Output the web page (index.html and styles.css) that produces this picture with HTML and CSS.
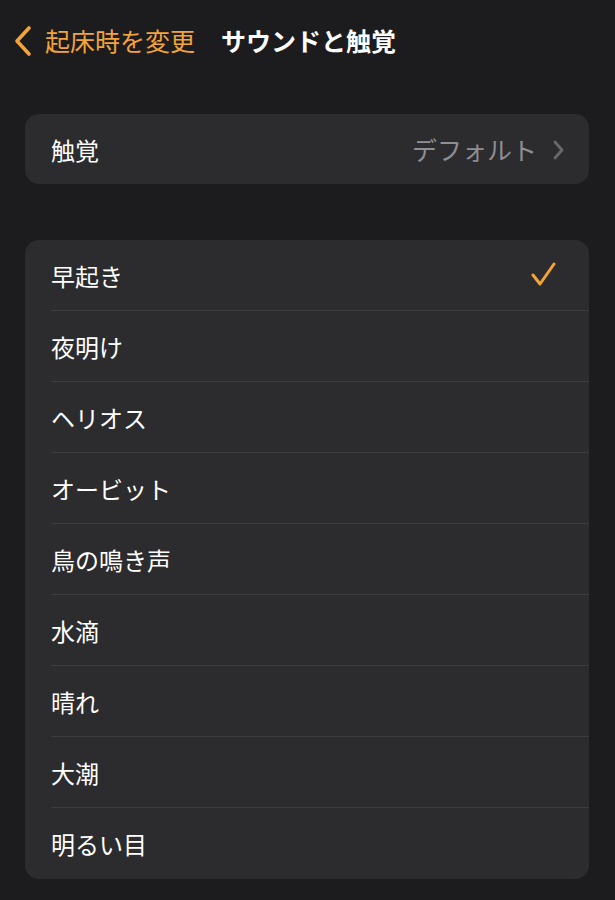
FILE: index.html
```html
<!DOCTYPE html>
<html lang="ja">
<head>
    <meta charset="UTF-8">
    <meta name="viewport" content="width=device-width, initial-scale=1.0">
    <title>サウンドと触覚</title>
    <link rel="stylesheet" href="styles.css">
</head>
<body>
    <div class="nav">
        <a class="back">
            <svg class="back-icon" width="20" height="32" viewBox="0 0 20 32">
                <path d="M16 3 L4 16 L16 29" fill="none" stroke="#f2a33a" stroke-width="3.6" stroke-linecap="round" stroke-linejoin="round"/>
            </svg>
            <span>起床時を変更</span>
        </a>
        <h1 class="title">サウンドと触覚</h1>
    </div>

    <div class="group haptic">
        <div class="row">
            <span class="label">触覚</span>
            <span class="value">デフォルト</span>
            <svg class="chev" width="14" height="22" viewBox="0 0 14 22">
                <path d="M4 3 L11 11 L4 19" fill="none" stroke="#68686c" stroke-width="2.8" stroke-linecap="round" stroke-linejoin="round"/>
            </svg>
        </div>
    </div>

    <div class="group sounds">
        <div class="row">
            <span class="label">早起き</span>
            <svg class="check" width="28" height="26" viewBox="0 0 28 26">
                <path d="M3 13 L10 22 L24 2" fill="none" stroke="#f2a33a" stroke-width="3" stroke-linecap="round" stroke-linejoin="round"/>
            </svg>
        </div>
        <div class="row"><span class="label">夜明け</span></div>
        <div class="row"><span class="label">ヘリオス</span></div>
        <div class="row"><span class="label">オービット</span></div>
        <div class="row"><span class="label">鳥の鳴き声</span></div>
        <div class="row"><span class="label">水滴</span></div>
        <div class="row"><span class="label">晴れ</span></div>
        <div class="row"><span class="label">大潮</span></div>
        <div class="row"><span class="label">明るい目</span></div>
    </div>
</body>
</html>
```

FILE: styles.css
```css
body {
    margin: 0;
    background-color: #1c1c1e;
    color: #ffffff;
    font-family: "Noto Sans CJK JP", "Noto Sans", sans-serif;
    font-size: 24px;
    padding: 0 26px 0 25px;
}
.nav {
    display: flex;
    align-items: center;
    height: 80px;
    padding-bottom: 4px;
    margin-left: -12px;
}
.back {
    display: flex;
    align-items: center;
    color: #f2a33a;
    font-size: 25px;
}
.back-icon {
    margin-right: 12px;
    margin-top: 2px;
}
.title {
    margin: 0 0 0 26px;
    font-size: 25px;
    font-weight: bold;
}
.group {
    background-color: #2c2c2e;
    border-radius: 14px;
    padding-left: 26px;
}
.haptic {
    margin-top: 30px;
}
.sounds {
    margin-top: 56px;
}
.row {
    display: flex;
    align-items: center;
    height: 70px;
    padding-right: 24px;
}
.sounds .row {
    height: 71px;
    box-sizing: border-box;
    border-bottom: 1px solid #3d3d40;
    padding-right: 31px;
}
.sounds .row:last-child {
    border-bottom: 0;
}
.label {
    flex: 1;
}
.value {
    color: #8e8e93;
    font-size: 25px;
    margin-right: 14px;
}
.chev {
    margin-top: 2px;
}
```
